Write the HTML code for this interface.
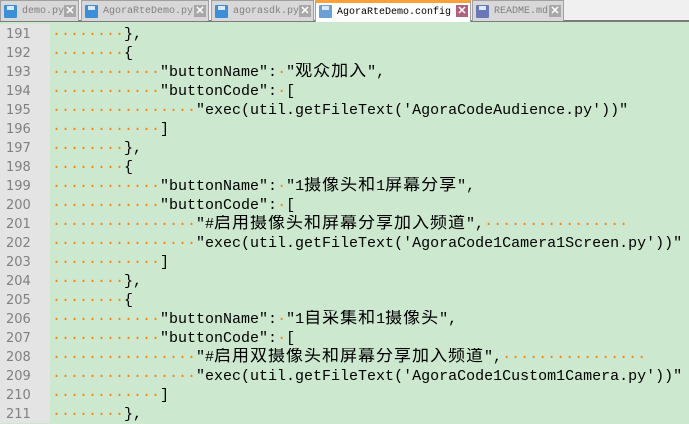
<!DOCTYPE html>
<html><head><meta charset="utf-8"><style>
*{margin:0;padding:0;box-sizing:border-box}
body{width:689px;height:423px;overflow:hidden;background:#cce8cf;position:relative;font-family:"Liberation Mono","Noto Sans CJK SC",monospace}
#tabs{position:absolute;left:0;top:0;width:689px;height:22px;background:#f0f0f0;border-bottom:2px solid #7a7a7a}
.tab{position:absolute;top:0;height:21px;background:#d8d8d8;border:1px solid #a0a0a0;border-bottom:none;font-family:"Liberation Mono",monospace;font-size:10px;color:#808080;line-height:21px;padding-left:21px;white-space:nowrap;overflow:hidden}
.tab.act{background:#fff;border-top:3px solid #f9a23a;color:#000;line-height:19px;height:22px}
.ic{position:absolute;left:3px;top:4px;width:13px;height:13px;background:#3b8fd8;border-radius:1px}
.ic:after{content:"";position:absolute;left:3px;top:1px;width:7px;height:4px;background:#dbeaf8}
.x{position:absolute;right:2px;top:4px;width:12px;height:12px;background:#a8a8a8;color:#fff;font:bold 11px/12px "Liberation Sans",sans-serif;text-align:center}
.act .x{background:#b0607a}
#gut{position:absolute;left:0;top:24px;width:50px;height:399px;background:#e4e4e4}
.ln{position:absolute;height:19px;line-height:19px;font-family:"DejaVu Sans",sans-serif;font-size:13px;color:#808080;left:6px}
.cl{position:absolute;left:52px;height:19px;line-height:19px;font-size:15px;white-space:pre;color:#000;overflow:hidden}
.d{color:#ff8000}
.c{font-size:17px;font-family:"Noto Sans CJK SC",sans-serif;letter-spacing:1px;line-height:0}
</style></head><body>
<div id="tabs">
<div class="tab" style="left:0;width:79px"><span class="ic"></span>demo.py<span class="x">✕</span></div>
<div class="tab" style="left:81px;width:128px"><span class="ic"></span>AgoraRteDemo.py<span class="x">✕</span></div>
<div class="tab" style="left:211px;width:103px"><span class="ic"></span>agorasdk.py<span class="x">✕</span></div>
<div class="tab act" style="left:315px;width:156px"><span class="ic" style="top:2px;background:#6a9fd8"></span>AgoraRteDemo.config<span class="x" style="top:2px">✕</span></div>
<div class="tab" style="left:472px;width:92px"><span class="ic" style="background:#6a78b8"></span>README.md<span class="x">✕</span></div>
</div>
<div id="gut"></div>
<div class="ln" style="top:25px">191</div><div class="cl" style="top:25px"><span class="d">········</span>},</div>
<div class="ln" style="top:44px">192</div><div class="cl" style="top:44px"><span class="d">········</span>{</div>
<div class="ln" style="top:63px">193</div><div class="cl" style="top:63px"><span class="d">············</span>"buttonName":<span class="d">·</span>"<span class="c">观众加入</span>",</div>
<div class="ln" style="top:82px">194</div><div class="cl" style="top:82px"><span class="d">············</span>"buttonCode":<span class="d">·</span>[</div>
<div class="ln" style="top:101px">195</div><div class="cl" style="top:101px"><span class="d">················</span>"exec(util.getFileText('AgoraCodeAudience.py'))"</div>
<div class="ln" style="top:120px">196</div><div class="cl" style="top:120px"><span class="d">············</span>]</div>
<div class="ln" style="top:139px">197</div><div class="cl" style="top:139px"><span class="d">········</span>},</div>
<div class="ln" style="top:158px">198</div><div class="cl" style="top:158px"><span class="d">········</span>{</div>
<div class="ln" style="top:177px">199</div><div class="cl" style="top:177px"><span class="d">············</span>"buttonName":<span class="d">·</span>"1<span class="c">摄像头和</span>1<span class="c">屏幕分享</span>",</div>
<div class="ln" style="top:196px">200</div><div class="cl" style="top:196px"><span class="d">············</span>"buttonCode":<span class="d">·</span>[</div>
<div class="ln" style="top:215px">201</div><div class="cl" style="top:215px"><span class="d">················</span>"#<span class="c">启用摄像头和屏幕分享加入频道</span>",<span class="d">················</span></div>
<div class="ln" style="top:234px">202</div><div class="cl" style="top:234px"><span class="d">················</span>"exec(util.getFileText('AgoraCode1Camera1Screen.py'))"</div>
<div class="ln" style="top:253px">203</div><div class="cl" style="top:253px"><span class="d">············</span>]</div>
<div class="ln" style="top:272px">204</div><div class="cl" style="top:272px"><span class="d">········</span>},</div>
<div class="ln" style="top:291px">205</div><div class="cl" style="top:291px"><span class="d">········</span>{</div>
<div class="ln" style="top:310px">206</div><div class="cl" style="top:310px"><span class="d">············</span>"buttonName":<span class="d">·</span>"1<span class="c">自采集和</span>1<span class="c">摄像头</span>",</div>
<div class="ln" style="top:329px">207</div><div class="cl" style="top:329px"><span class="d">············</span>"buttonCode":<span class="d">·</span>[</div>
<div class="ln" style="top:348px">208</div><div class="cl" style="top:348px"><span class="d">················</span>"#<span class="c">启用双摄像头和屏幕分享加入频道</span>",<span class="d">················</span></div>
<div class="ln" style="top:367px">209</div><div class="cl" style="top:367px"><span class="d">················</span>"exec(util.getFileText('AgoraCode1Custom1Camera.py'))"</div>
<div class="ln" style="top:386px">210</div><div class="cl" style="top:386px"><span class="d">············</span>]</div>
<div class="ln" style="top:405px">211</div><div class="cl" style="top:405px"><span class="d">········</span>},</div>
</body></html>
